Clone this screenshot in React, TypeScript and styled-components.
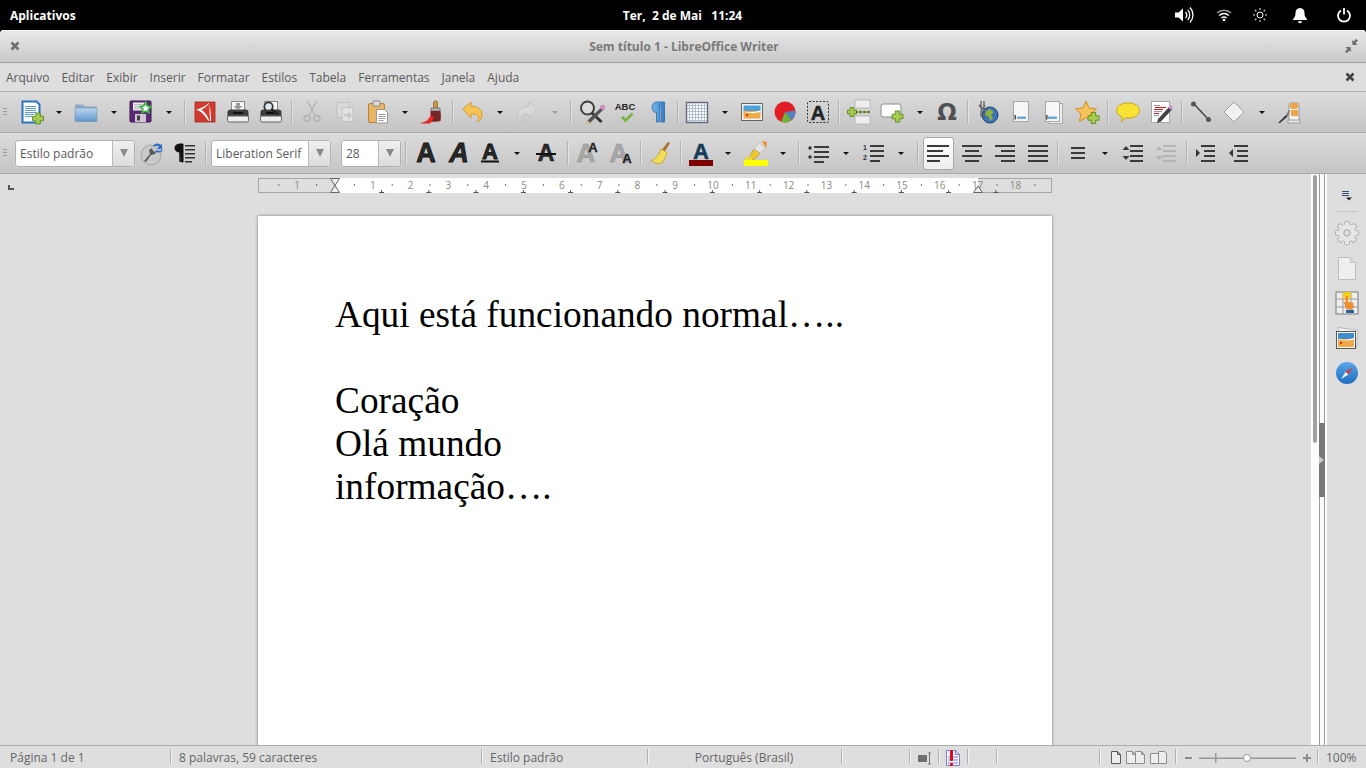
import React from "react";
import styled, { createGlobalStyle } from "styled-components";

const Global = createGlobalStyle`
  html, body { margin: 0; padding: 0; background: #000; overflow: hidden; }
  body { font-family: "Open Sans", "Noto Sans", sans-serif; }
`;

const Screen = styled.div`
  width: 1366px; height: 768px; display: flex; flex-direction: column; overflow: hidden; background: #000;
`;
const TopBar = styled.header`
  height: 30px; flex: none; display: grid; grid-template-columns: 1fr auto 1fr; align-items: center;
  color: #fff; font-size: 12px; font-weight: 700;
`;
const AppsLabel = styled.div` padding-left: 10px; `;
const Clock = styled.div` white-space: pre; margin-left: -1px; `;
const Tray = styled.div`
  display: flex; justify-content: flex-end; align-items: center; height: 30px;
`;
const TraySlot = styled.span<{ $w: number }>`
  width: ${(p) => p.$w}px; display: flex; justify-content: center; align-items: center;
`;
const Win = styled.div`
  flex: 1; min-height: 0; display: flex; flex-direction: column; border-radius: 4px 4px 0 0; overflow: hidden; background: #dedede;
`;
const TitleBar = styled.div`
  height: 32px; flex: none; display: grid; grid-template-columns: 1fr auto 1fr; align-items: center; padding: 0 8px 0 10px;
  background: linear-gradient(#e9e9e9, #c8c8c8); border-bottom: 1px solid #9c9c9c; box-shadow: inset 0 1px 0 #f4f4f4;
`;
const TitleEnd = styled.div` display: flex; justify-content: flex-end; `;
const WinTitle = styled.div` font-size: 12px; font-weight: 700; color: #7a7a7a; `;
const MenuBar = styled.nav`
  height: 28px; flex: none; display: flex; align-items: center; justify-content: space-between; padding: 0 11px 0 6px;
  background: #dedede; border-bottom: 1px solid #aeaeae;
`;
const MenuList = styled.div` display: flex; gap: 12px; `;
const MenuItem = styled.span` font-size: 12px; color: #5a5a5a; `;
const Toolbar = styled.div`
  height: 40px; flex: none; display: flex; align-items: center; padding-left: 3px;
  background: linear-gradient(#dcdcdc, #c4c4c4); border-bottom: 1px solid #a8a8a8;
`;
const Grip = styled.span<{ $w: number }>`
  width: ${(p) => p.$w}px; flex: none; height: 8px; position: relative;
  &::before { content: ""; display: block; width: 4px; height: 7px;
    background: repeating-linear-gradient(#9a9a9a 0 1px, transparent 1px 3px); }
`;
const Tool = styled.span<{ $w?: number }>`
  width: ${(p) => p.$w ?? 33}px; height: 32px; flex: none; display: flex; align-items: center; justify-content: center;
`;
const ActiveTool = styled(Tool)`
  width: 31px; height: 33px; margin: 0 1px 0 0; box-sizing: border-box; border: 1px solid #a8a8a8; border-radius: 3px;
  background: linear-gradient(#fff, #eee);
`;
const Drop = styled.span<{ $off?: boolean; $w?: number }>`
  width: ${(p) => p.$w ?? 22}px; flex: none; display: flex; justify-content: center;
  &::before { content: ""; border: 3px solid transparent; border-bottom-width: 0; border-top: 3.5px solid ${(p) => (p.$off ? "#9d9d9d" : "#111")}; }
`;
const Sep = styled.span<{ $w?: number }>`
  width: ${(p) => p.$w ?? 8}px; flex: none; height: 24px; display: flex; justify-content: center;
  &::before { content: ""; width: 1px; height: 100%; background: #b3b3b3; box-shadow: 1px 0 0 #e2e2e2; }
`;
const Combo = styled.div<{ $w: number; $ml?: number }>`
  width: ${(p) => p.$w}px; margin-left: ${(p) => p.$ml ?? 0}px; height: 27px; flex: none; box-sizing: border-box; display: flex;
  border: 1px solid #b0b0b0; border-radius: 3px; background: #fff; overflow: hidden; box-shadow: 0 0 1px #eee;
`;
const ComboText = styled.span`
  flex: 1; font-size: 12px; line-height: 25px; color: #5a5a5a; padding-left: 4px; white-space: nowrap;
`;
const ComboBtn = styled.span`
  width: 21px; flex: none; border-left: 1px solid #b8b8b8; background: linear-gradient(#f0f0f0, #dcdcdc);
  display: flex; align-items: center; justify-content: center;
  &::before { content: ""; border: 4px solid transparent; border-bottom-width: 0; border-top: 8px solid #8a8a8a; }
`;
const Workspace = styled.main` flex: 1; min-height: 0; display: flex; background: #dedede; `;
const DocArea = styled.div` width: 1311px; flex: none; overflow: hidden; padding-right: 1px; box-sizing: border-box; `;
const RulerRow = styled.div`
  display: grid; grid-template-columns: 1fr 794px 1fr; height: 42px; padding-top: 4px; box-sizing: border-box;
`;
const TabCorner = styled.span`
  display: block; width: 6px; height: 5px; margin: 7px 0 0 8px; border-left: 2px solid #555; border-bottom: 2px solid #555; box-sizing: border-box;
`;
const DocPage = styled.article`
  width: 794px; height: 1123px; margin: 0 auto; box-sizing: border-box; background: #fff; padding: 77px 77px;
  box-shadow: 0 0 3px rgba(0,0,0,.45);
  font-family: "Liberation Serif", "Times New Roman", serif; font-size: 37.33px; line-height: 43px; color: #000;
`;
const Para = styled.p` margin: 0; min-height: 43px; white-space: pre; `;
const ScrollTrack = styled.div` width: 8px; flex: none; background: #fff; padding: 1px 2px 0; box-sizing: border-box; `;
const ScrollThumb = styled.div` width: 4px; height: 268px; border-radius: 2px; background: #a0a0a0; `;
const Splitter = styled.div`
  width: 8px; flex: none; box-sizing: border-box; position: relative; background: #fbfbfb;
  border-left: 1px solid #9a9a9a; border-right: 2px solid #fff; box-shadow: inset -1px 0 0 #9a9a9a;
`;
const SplitHandle = styled.div`
  position: absolute; left: -1px; top: 249px; width: 6px; height: 74px; background: #777;
  display: flex; align-items: center;
  &::before { content: ""; border: 4px solid transparent; border-right-width: 0; border-left: 5px solid #c8c8c8; margin-left: 0; }
`;
const Deck = styled.aside`
  flex: 1; display: flex; flex-direction: column; align-items: center; padding-top: 3px; background: #dedede;
`;
const DeckTool = styled.span`
  width: 39px; height: 35px; flex: none; display: flex; align-items: center; justify-content: center;
`;
const DeckRule = styled.span` width: 23px; height: 1px; margin: -1px 0 3px; background: #c6c6c6; flex: none; `;
const StatusBar = styled.footer`
  height: 23px; flex: none; display: flex; background: #dedede; border-top: 1px solid #acacac; box-sizing: border-box;
  font-size: 12px; color: #666; line-height: 22px;
`;
const Cell = styled.div<{ $w: number; $pad?: number; $center?: boolean; $last?: boolean; $gap?: number }>`
  width: ${(p) => p.$w}px; flex: none; box-sizing: border-box; padding: 1px 0 0 ${(p) => p.$pad ?? 0}px; position: relative;
  display: flex; align-items: center; gap: ${(p) => p.$gap ?? 0}px; white-space: nowrap; justify-content: ${(p) => (p.$center ? "center" : "flex-start")};
  &::after { content: ""; display: ${(p) => (p.$last ? "none" : "block")}; position: absolute; right: -1px; top: 3px; bottom: 4px; width: 1px; background: #b0b0b0; box-shadow: 1px 0 0 #f2f2f2; }
`;

/* ---------- icon helpers ---------- */
const I = ({ children, w = 24, h = 24 }: { children: React.ReactNode; w?: number; h?: number }) => (
  <svg width={w} height={h} viewBox={`0 0 ${w} ${h}`} fill="none" style={{ display: "block", overflow: "visible" }}>{children}</svg>
);
const Plus = ({ x, y, s = 10 }: { x: number; y: number; s?: number }) => (
  <path d={`M${x - s / 5} ${y - s / 2}h${(2 * s) / 5}v${(3 * s) / 10}h${(3 * s) / 10}v${(2 * s) / 5}h${-(3 * s) / 10}v${(3 * s) / 10}h${-(2 * s) / 5}v${-(3 * s) / 10}h${-(3 * s) / 10}v${-(2 * s) / 5}h${(3 * s) / 10}z`} fill="#a5cc4c" stroke="#5d8a1c" strokeWidth=".9" />
);
const Bars = ({ rows, x = 0, c = "#3a3a3a", t = 2 }: { rows: number[][]; x?: number; c?: string; t?: number }) => (
  <>{rows.map(([a, y, w], i) => <rect key={i} x={x + a} y={y} width={w} height={t} fill={c} />)}</>
);
const txt = (fam: string) => ({ fontFamily: fam, fontWeight: 700 } as const);
const SANS = '"Liberation Sans", Arial, sans-serif';

const NewDoc = () => (<I><path d="M3.500 1.500h14l3 3v18h-17z" fill="#fff" stroke="#2c72bd" strokeWidth="2" /><Bars c="#5f9bd6" t={1} rows={[[6,6,11],[6,8,11],[6,10,11],[6,12,11],[6,14,9],[6,16,7]]} /><Plus x={19} y={18.500} s={11} /></I>);
const Folder = () => (<I><defs><linearGradient id="fo" x1="0" x2="0" y1="0" y2="1"><stop offset="0" stopColor="#bcd6ee" /><stop offset="1" stopColor="#5f97cd" /></linearGradient></defs><path d="M1 5.500a1 1 0 0 1 1-1h7l2 2h11a1 1 0 0 1 1 1v13a1 1 0 0 1-1 1H2a1 1 0 0 1-1-1z" fill="#8fa9c0" /><rect x="1" y="8" width="22" height="13.500" rx="1" fill="url(#fo)" stroke="#6f93b5" strokeWidth=".6" /></I>);
const Floppy = () => (<I><rect x="1" y="1" width="21" height="21" rx="1" fill="#5b2a72" stroke="#3b1850" /><rect x="4" y="2.500" width="14" height="8" fill="#eee" /><Bars c="#bbb" t={1} rows={[[5,4,11],[5,6,11],[5,8,9]]} /><rect x="6" y="14" width="11" height="8" fill="#cfc6d4" /><rect x="8" y="15.500" width="3" height="5" fill="#444" /><path d="M16.500 2.500l1.800 3.400 3.700.6-2.700 2.600.6 3.700-3.400-1.700-3.300 1.700.6-3.700-2.700-2.600 3.700-.6z" fill="#fff" stroke="#3fb24a" strokeWidth="1.700" /></I>);
const Pdf = () => (<I><rect x="2" y="2" width="20" height="20" fill="#d2392f" stroke="#a12a24" strokeWidth=".8" /><path d="M16 2.800c-3 3-8 5.700-13 7 4 .8 8 4 12 11h1.500C14 15 12 12 8 9.800c3-1 6-3.500 8-6zM16.500 5c-.3 5 .3 11 .6 16h.9C18 15 17.500 9 16.500 5z" fill="#fff" /></I>);
const Printer = ({ lens }: { lens?: boolean }) => (<I><rect x="5.500" y="1.500" width="13" height="10" fill="#f4f4f4" stroke="#8a8a8a" /><path d="M1.500 12.500a3 3 0 0 1 3-3h15a3 3 0 0 1 3 3v8h-21z" fill="#3c3c3c" /><rect x="1.500" y="16" width="21" height="6" rx="1.500" fill="#eee" stroke="#666" /><rect x="7" y="12" width="10" height="2" fill="#111" />{lens ? (<><circle cx="9.500" cy="6.500" r="4.200" fill="#dfe7ee" stroke="#333" strokeWidth="1.700" /><path d="M12.500 9.500l7 5" stroke="#222" strokeWidth="2.500" /></>) : <path d="M10 3h4v3h2.500L12 10 7.500 6H10z" fill="#999" />}</I>);
const Scissors = () => (<I><g stroke="#b4b4b4" strokeWidth="1.500"><path d="M7.500 1l7.500 14M16.500 1L9 15" /><circle cx="7" cy="18.500" r="3" /><circle cx="17" cy="18.500" r="3" /></g></I>);
const CopyOff = () => (<I><rect x="4" y="2.500" width="12" height="15" fill="#dadada" stroke="#c0c0c0" /><rect x="9" y="7.500" width="11" height="14" fill="#e2e2e2" stroke="#c0c0c0" /><path d="M11 14h4v-3l4 4.500-4 4v-3h-4z" fill="#c9c9c9" /></I>);
const Paste = () => (<I><rect x="2.500" y="3.500" width="16" height="19" rx="1.500" fill="#e9b566" stroke="#b9823a" /><rect x="7" y="1" width="7" height="5" rx="1" fill="#ddd" stroke="#888" /><path d="M10.500 9.500h8l3 3v10.500h-11z" fill="#fff" stroke="#999" /><Bars c="#999" t={1} rows={[[12.500,14,7],[12.500,16,7],[12.500,18,7],[12.500,20,5]]} /></I>);
const Brush = () => (<I><rect x="13.500" y="1" width="4" height="8" rx="1.500" fill="#c89648" stroke="#8a6222" strokeWidth=".7" /><rect x="11" y="8" width="9" height="3" fill="#b5b5b5" stroke="#555" strokeWidth=".6" /><path d="M10.500 11h10c.5 4 .5 7 0 10-4 .8-7 1-10 .7z" fill="#7a2525" /><path d="M1 22.500c4 0 7-2 9.500-7l3 1c0 3-2 5.500-3.500 7H1z" fill="#e32a2a" /></I>);
const Undo = ({ off }: { off?: boolean }) => (<I><g transform={off ? "translate(24 0) scale(-1 1)" : undefined}><path d="M2 9l8-7v4.200c6 0 11 3 11 8.800 0 3-1.500 5.500-5 7 2-2 2.300-4.500 1-6.300-1.300-1.500-4-2-7-1.700V18z" fill={off ? "#d8d8d8" : "#f6c452"} stroke={off ? "#c4c4c4" : "#d99a28"} /></g></I>);
const Find = () => (<I w={26}><circle cx="8.500" cy="8" r="6.500" fill="#e6e6e6" fillOpacity=".5" stroke="#3f3f3f" strokeWidth="2" /><path d="M13 13l9.500 9" stroke="#333" strokeWidth="3" /><path d="M22 7.500l2.500 2L11 23l-3.500 1 1-3.500z" fill="#555" /><circle cx="23.500" cy="7.500" r="2.200" fill="#d78fcf" stroke="#a86aa0" strokeWidth=".5" /><path d="M7.500 24l1-3.500 2.500 2.500z" fill="#f2d777" /></I>);
const Spell = () => (<I><text x="12" y="10" textAnchor="middle" fontSize="9.500" fill="#222" {...txt(SANS)}>ABC</text><path d="M9 17l3.500 3.500 7-7" stroke="#7fb044" strokeWidth="2.800" /></I>);
const Pilcrow = () => (<I><defs><linearGradient id="pl" x1="0" x2="1" y1="0" y2="0"><stop offset="0" stopColor="#7ab8ea" /><stop offset="1" stopColor="#2f80c8" /></linearGradient></defs><path d="M10 2h8.500v20H15V5h-1.500v17H10.500V12.500C7.500 12.500 6 10 6 7.500S7.500 2 10 2z" fill="url(#pl)" stroke="#1c5f9e" strokeWidth=".7" /></I>);
const Table = () => {
  const c = [3, 6, 9, 12, 15, 18];
  return (<I><rect x="1.500" y="2.500" width="21" height="20" fill="#fff" stroke="#667" strokeWidth="1.400" />{c.map((v) => <path key={v} d={`M${v + 1.500} 3v19M2 ${v + 2.500}h20`} stroke="#9db1cb" strokeWidth=".8" />)}</I>);
};
const Pic = () => (<I><rect x="1.500" y="3.500" width="21" height="17" fill="#f2f2f2" stroke="#666" /><rect x="3.500" y="5.500" width="17" height="7" fill="#4d9fdb" /><rect x="3.500" y="11" width="17" height="7.500" fill="#eeab47" /><path d="M3.500 11.500q8 2 17-1v1.500q-8 2-17 0z" fill="#fff" /><circle cx="7" cy="15" r="1.300" fill="#d3351f" /></I>);
const Chart = () => (<I><circle cx="12" cy="12" r="10.500" fill="#e11c24" /><path d="M12 12l10.500-1.500a10.500 10.500 0 0 1-4 9.500z" fill="#5284c4" /><path d="M12 12l6.500 8A10.500 10.500 0 0 1 8 21.700z" fill="#6fb13c" /></I>);
const TextBox = () => (<I><rect x="1.500" y="1.500" width="21" height="21" rx="1.500" stroke="#333" strokeDasharray="2 1.500" /><text x="12" y="19.500" textAnchor="middle" fontSize="20" fill="#222" stroke="#222" strokeWidth=".5" {...txt(SANS)}>A</text></I>);
const PageBreak = () => (<I><rect x="8" y="0" width="15" height="8" fill="#eee" stroke="#aaa" strokeWidth=".7" /><rect x="8" y="16" width="15" height="8" fill="#eee" stroke="#aaa" strokeWidth=".7" /><path d="M8 12h16" stroke="#5b7e14" strokeWidth="2" strokeDasharray="3 1" /><Plus x={5} y={12} s={9} /></I>);
const Field = () => (<I><rect x="1" y="4" width="20" height="13" rx="2" fill="#fff" stroke="#8c8c8c" /><Plus x={17.500} y={16.500} s={11} /></I>);
const Omega = () => (<I><text x="12" y="20" textAnchor="middle" fontSize="23" fill="#4f4f4f" {...txt('"DejaVu Sans", sans-serif')}>Ω</text></I>);
const Hyper = () => (<I><circle cx="14" cy="15" r="8" fill="#3d74b4" stroke="#1d4675" /><path d="M10 11l4-2 4 3-3 3 2 3-3 3-1-4-4-2z" fill="#8bb13f" /><path d="M5 1v8M8 1v8M3 5l4 5M9 5l-4 6M5 11v6M8 11v6" stroke="#5c5c5c" strokeWidth="1.300" /></I>);
const Foot = ({ stack }: { stack?: boolean }) => (<I>{stack && <rect x="6.500" y="3.500" width="14" height="20" fill="#eee" stroke="#aaa" />}<rect x={stack ? 3.500 : 4.500} y="1.500" width={stack ? 14 : 15} height="20" fill="#f6f6f6" stroke="#a8a8a8" /><rect x={stack ? 6 : 8} y="16.500" width="9" height="2.500" fill="#6da9d8" /><rect x={stack ? 4.200 : 5.500} y={15} width="1.300" height="4.500" fill="#333" /></I>);
const Star = () => (<I><path d="M11 1l3 7 7.500.8-5.500 5 1.500 7.500L11 17.500l-6.500 3.800L6 14 .5 8.800 8 8z" fill="#f7c15a" stroke="#d18f1f" /><Plus x={18.500} y={18} s={11} /></I>);
const Balloon = () => (<I><path d="M12 3c6.500 0 11.500 3 11.500 7.500S18.500 18 13 18c-1.500 0-3 0-4-.2L5.500 21.500l.8-4.500C2.500 15.500.5 13 .5 10.500.5 6 5.500 3 12 3z" fill="#f7e235" stroke="#c9a90f" /></I>);
const Track = () => (<I><rect x="2.500" y="1.500" width="18" height="21" fill="#fff" stroke="#a8a8a8" /><Bars c="#999" t={1} rows={[[5,5,6],[5,11,8],[5,15,5]]} /><Bars c="#d91c1c" t={1} rows={[[6,7,11],[5,9,9],[5,13,5]]} /><path d="M20 7l3 2.500-11 12-4 1.500 1-4z" fill="#444" /><circle cx="21.800" cy="7.500" r="2" fill="#d78fcf" /></I>);
const LineTool = () => (<I><path d="M5 4l14 15" stroke="#444" strokeWidth="1.500" /><circle cx="4.500" cy="4" r="2.500" fill="#555" /><circle cx="19.500" cy="19.500" r="2.500" fill="#555" /></I>);
const Diamond = () => (<I><path d="M12 2l10 10-10 10L2 12z" fill="#f1f1f1" stroke="#9c9c9c" /></I>);
const Bottle = () => (<I><rect x="12" y="3" width="10" height="19" rx="2" fill="#f2f2f2" stroke="#999" /><rect x="13" y="3" width="8" height="6" rx="2" fill="#f0a44a" /><rect x="14" y="10" width="7" height="6" fill="#f0a44a" /><rect x="11" y="20" width="12" height="3" fill="#e4e4e4" stroke="#888" strokeWidth=".7" /><path d="M1 23l8-8 1.500 1.500L3 23z" fill="#333" /><path d="M9 15l3-5 1 .5-2 6z" fill="#777" /></I>);
const FontA = ({ italic, under }: { italic?: boolean; under?: boolean }) => (
  <I><text x="12" y={under ? 17.500 : 21} textAnchor="middle" fontSize={under ? 22 : 27} fill="#2a2a2a" stroke="#111" strokeWidth=".8" fontStyle={italic ? "italic" : undefined} {...txt(SANS)}>A</text>
    {under && <rect x="3" y="19.500" width="18" height="2" fill="#111" />}</I>
);
const StrikeA = () => (<I><text x="12" y="20" textAnchor="middle" fontSize="23" fill="#2a2a2a" stroke="#111" strokeWidth=".5" {...txt(SANS)}>A</text><rect x="2" y="12" width="20" height="2" fill="#111" /></I>);
const Grow = ({ shrink }: { shrink?: boolean }) => (<I><text x="10" y="21" textAnchor="middle" fontSize="26" fill="#a8a8a8" stroke="#8e8e8e" strokeWidth=".5" {...txt(SANS)}>A</text><text x={shrink ? 18 : 17} y={shrink ? 22 : 11} textAnchor="middle" fontSize="13" fill="#222" stroke="#222" strokeWidth=".3" {...txt(SANS)}>A</text></I>);
const Broom = () => (<I><path d="M20 1l2 1-5 8-3-1.500z" fill="#a9702a" /><path d="M13 8l6 3.500c-1 4-3 8-5.500 11C10 23 6 22 3 19.500c4-.5 8-6 10-11.500z" fill="#f1dd58" stroke="#b9a12d" strokeWidth=".8" /></I>);
const FontColor = () => (<I><text x="12" y="18" textAnchor="middle" fontSize="22" fill="#123a57" stroke="#123a57" strokeWidth=".5" {...txt(SANS)}>A</text><rect x="0" y="19" width="24" height="6" fill="#7f0000" /></I>);
const Marker = () => (<I><path d="M6 15l4-7 6 4-5 6-5 1z" fill="#efc52f" stroke="#b38c12" strokeWidth=".6" /><path d="M10 8l5-6 7 5-6 5z" fill="#e5e5e5" stroke="#aaa" strokeWidth=".5" /><path d="M18 0l5 1-1 6z" fill="#ef8d2c" /><rect x="0" y="19" width="24" height="6" fill="#ffff00" /><rect x="1" y="16" width="7" height="3" fill="#e9d83e" /></I>);
const BulletList = () => (<I><circle cx="3" cy="7" r="1.700" fill="#333" /><circle cx="3" cy="16" r="1.700" fill="#333" /><Bars t={2} rows={[[7,5,15],[7,10,15],[7,15,15],[7,20,10]]} /></I>);
const NumList = () => (<I><text x="3" y="9" textAnchor="middle" fontSize="7" fill="#333" {...txt(SANS)}>1</text><text x="3" y="19" textAnchor="middle" fontSize="7" fill="#333" {...txt(SANS)}>2</text><Bars t={2} rows={[[8,4,14],[8,9,14],[8,14,14],[8,19,10]]} /></I>);
const Align = ({ rows }: { rows: number[][] }) => <I><Bars t={2} rows={rows} /></I>;
const Spacing = () => (<I><Bars t={2} rows={[[5,6,14],[5,11,14],[5,16,14]]} /></I>);
const ParaSpace = ({ off }: { off?: boolean }) => { const c = off ? "#b4b4b4" : "#3a3a3a"; return (<I><path d="M5 5l3.500 4h-7zM5 19l3.500-4h-7z" fill={c} /><Bars c={c} t={2} rows={[[9,4,13],[9,9,13],[9,14,13],[9,19,13]]} /></I>); };
const Indent = ({ rev }: { rev?: boolean }) => (<I><path d={rev ? "M1 12l4-4v8z" : "M5 12L1 8v8z"} fill="#333" /><Bars t={2} rows={[[6,4,14],[9,9,11],[9,14,11],[6,19,14]]} /></I>);
const UpdateStyle = () => (<I w={26}><circle cx="12" cy="14" r="10" fill="#c9c9c9" stroke="#a5a5a5" /><path d="M5 20l6-7-1-4 3-2 1 3 3 1-1 2-4 1-5 7z" fill="#5a5a5a" /><path d="M14 5a5 5 0 0 1 8-1l1-2v6h-5l2-2a3 3 0 0 0-5 0zM24 9a5 5 0 0 1-8 1l2-1a3 3 0 0 0 5-1z" fill="#2e6fc4" /></I>);
const ParaMark = () => (<I><path d="M7 21V11C3 11 2 9 2 7s1.500-4 5-4h3v18H8.500V5M7 5v16" fill="#111" stroke="#111" /><Bars c="#333" t={1.500} rows={[[12,4,10],[12,8,10],[12,12,10],[12,16,10],[12,20,7]]} /></I>);

const Close = ({ c = "#666" }: { c?: string }) => (<I w={10} h={10}><path d="M1.500 1.500l7 7M8.500 1.500l-7 7" stroke={c} strokeWidth="2.600" /></I>);
const Collapse = () => (<I w={14} h={14}><path d="M8 6h5l-2-2 2.500-2.500-2-1.500L9 2.500 7.500 1zM6 8H1l2 2-2.500 2.500 2 1.500L5 11.500 6.500 13z" transform="translate(.5 0)" fill="#6c6c6c" /></I>);

const Volume = () => (<I w={20} h={18}><path d="M1 6.500h3.500L9 2.500v13l-4.500-4H1z" fill="#fff" /><path d="M11.500 6a4.500 4.500 0 0 1 0 6M13.800 4a7.500 7.500 0 0 1 0 10M16 1.500a11 11 0 0 1 0 15" stroke="#fff" strokeWidth="1.300" /></I>);
const Wifi = () => (<I w={16} h={14}><path d="M1 5a10 10 0 0 1 14 0" stroke="#9b9b9b" strokeWidth="1.500" /><path d="M3.200 7.500a7 7 0 0 1 9.600 0M5.500 10a3.800 3.800 0 0 1 5 0" stroke="#fff" strokeWidth="1.500" /><circle cx="8" cy="12" r="1.300" fill="#fff" /></I>);
const Sun = () => (<I w={14} h={14}><circle cx="7" cy="7" r="3" stroke="#fff" /><path d="M7 0v2M7 12v2M0 7h2M12 7h2M2 2l1.400 1.400M10.600 10.600L12 12M2 12l1.400-1.400M10.600 3.400L12 2" stroke="#ddd" strokeWidth="1.100" /></I>);
const Bell = () => (<I w={14} h={16}><path d="M7 1c3 0 4.500 2.200 4.500 5 0 3.500 1 4.500 2.500 6v1H0v-1c1.500-1.500 2.500-2.500 2.500-6C2.500 3.200 4 1 7 1z" fill="#fff" /><path d="M5 14.200h4a2 2 0 0 1-4 0z" fill="#fff" /></I>);
const Power = () => (<I w={14} h={14}><path d="M4 2.500a6 6 0 1 0 6 0" stroke="#fff" strokeWidth="1.800" /><path d="M7 0v6.500" stroke="#fff" strokeWidth="1.800" /></I>);

const DeckMenu = () => (<I w={12} h={12}><Bars c="#3c4c6c" t={1} rows={[[1,2,7],[1,4,7],[1,6,7]]} /><path d="M5 8.500h6L8 11.500z" fill="#222" /></I>);
const Gear = () => {
  const teeth = [0, 45, 90, 135, 180, 225, 270, 315];
  return (<I>{teeth.map((a) => <rect key={a} x="9.500" y="0.500" width="5" height="5" rx="1" fill="#e6e6e6" stroke="#b2b2b2" transform={`rotate(${a} 12 12)`} />)}<circle cx="12" cy="12" r="8.500" fill="#e6e6e6" /><circle cx="12" cy="12" r="3.200" fill="#dedede" stroke="#a2a2a2" /></I>);
};
const DeckPage = () => (<I><path d="M3.500 1.500h12l5 5v17h-17z" fill="#efefef" stroke="#bdbdbd" /><path d="M15.500 1.500v5h5" fill="#dcdcdc" stroke="#c4c4c4" /></I>);
const DeckStyles = () => (<I><rect x="1" y="1" width="22" height="22" fill="#eee" stroke="#7a7a7a" /><path d="M1 8h22M1 16h22M8 1v22M16 1v22" stroke="#9a9a9a" /><rect x="8" y="1" width="8" height="7" fill="#f3cf1f" /><rect x="11" y="19" width="8" height="3" fill="#2a5fa0" /><path d="M8.500 11h2V5h2.500v6l5 .5c1 3 .5 5-.5 7h-6z" fill="#ef8e2c" /></I>);
const DeckGallery = () => (<I><path d="M3 1.500l20 3-1.500 17-18.500.5z" fill="#f2f2f2" stroke="#999" strokeWidth=".6" /><rect x="1.500" y="5.500" width="19" height="17" fill="#fff" stroke="#555" /><rect x="3" y="7" width="16" height="7" fill="#3f8ed2" /><rect x="3" y="13" width="16" height="8" fill="#efaa46" /><path d="M3 13q8 2 16-1v1.500q-8 2-16 0z" fill="#fff" /><circle cx="6" cy="17" r="1.200" fill="#d3351f" /></I>);
const Compass = () => (<I><defs><linearGradient id="nv" x1="0" x2="0" y1="0" y2="1"><stop offset="0" stopColor="#5aa7e8" /><stop offset="1" stopColor="#1f6cc0" /></linearGradient></defs><circle cx="12" cy="12" r="11" fill="url(#nv)" /><path d="M17.500 6.500L10.500 11l3 2.500z" fill="#e3322a" /><path d="M6 18l7.500-4.500-3-2.500z" fill="#f2f2f2" /></I>);

const SmallPage = ({ x = 0, c = "#5a5a5a" }: { x?: number; c?: string }) => (<path d={`M${x + .500} 1.500h6l3 3v9h-9zM${x + 6.500} 1.500v3h3`} fill="#eee" stroke={c} />);
const StatusInsert = () => (<I w={14} h={14}><rect x="1" y="4" width="9" height="7" fill="#707070" /><path d="M11 2h3M11 13h3M12.500 2v11" stroke="#777" /></I>);
const StatusSig = () => (<I w={16} h={18}><path d="M1.500 1.500h9l4 4v11h-13zM10.500 1.500v4h4M3 8h10M3 11h10M3 14h10" fill="#f8f8ff" stroke="#6e6ee0" strokeWidth=".9" /><rect x="5" y="1" width="3" height="11" rx="1" fill="#e01010" /><rect x="5" y="14" width="3" height="3" rx="1" fill="#e01010" /></I>);
const ViewSingle = () => (<I w={10} h={15}><SmallPage /></I>);
const ViewDouble = () => (<I w={19} h={15}><SmallPage c="#8c8c8c" /><SmallPage x={9} c="#8c8c8c" /></I>);
const ViewBook = () => (<I w={17} h={15}><path d="M.5 3.500h8v10h-8zM8.500 1.500h6l2 2v10h-8z" fill="#eee" stroke="#8c8c8c" /></I>);
const Zoomer = () => (<I w={126} h={14}><rect x="0" y="6" width="7" height="2" fill="#8a8a8a" /><rect x="14" y="6.500" width="97" height="1.500" fill="#999" /><rect x="30" y="2" width="1.500" height="10" fill="#999" /><circle cx="62" cy="7" r="3.500" fill="#fff" stroke="#999" /><path d="M118 6h3V3h2v3h3v2h-3v3h-2V8h-3z" fill="#8a8a8a" /></I>);

const Ruler = () => {
  const cm = 37.8;
  const org = 77;
  const nums = Array.from({ length: 18 }, (_, i) => i + 1);
  const halfs = Array.from({ length: 42 }, (_, i) => i - 2).map((k) => org + (k + 0.5) * cm).filter((x) => x > 0 && x < 794);
  const ticks = Array.from({ length: 14 }, (_, i) => org + 46.6 + i * 47.25);
  const color = "#8e8880";
  return (
    <svg width="794" height="15" viewBox="0 0 794 15" style={{ display: "block" }}>
      <rect x=".5" y=".5" width="793" height="14" fill="#dedede" stroke="#a6a6a6" />
      <rect x={org} y="0" width="643" height="15" fill="#fff" />
      {halfs.map((x) => <rect key={x} x={x} y="6" width="1" height="2" fill="#777" />)}
      {ticks.map((x) => <path key={x} d={`M${x - 2.500} 14.500h5M${x} 12v3`} stroke="#555" strokeWidth="1" />)}
      <text x={org - cm} y="11" textAnchor="middle" fontSize="10" fill={color} fontFamily='"Open Sans", sans-serif'>1</text>
      {nums.map((n) => <text key={n} x={org + n * cm} y="11" textAnchor="middle" fontSize="10" fill={color} fontFamily='"Open Sans", sans-serif'>{n}</text>)}
      <path d={`M${org - 4.500} .5h9L${org} 7.500l4.500 7h-9l4.500-7z`} fill="#eee" stroke="#666" />
      <path d={`M${720 - 4.500} 14.500h9L${720} 8z`} fill="#eee" stroke="#666" />
    </svg>
  );
};

const MENUS = ["Arquivo", "Editar", "Exibir", "Inserir", "Formatar", "Estilos", "Tabela", "Ferramentas", "Janela", "Ajuda"];
const T = ({ c }: { c: React.ReactNode }) => <Tool>{c}</Tool>;

export default function App() {
  return (
    <Screen>
      <Global />
      <TopBar>
        <AppsLabel>Aplicativos</AppsLabel>
        <Clock>{"Ter,  2 de Mai   11:24"}</Clock>
        <Tray>
          <TraySlot $w={44}><Volume /></TraySlot>
          <TraySlot $w={36}><Wifi /></TraySlot>
          <TraySlot $w={36}><Sun /></TraySlot>
          <TraySlot $w={44}><Bell /></TraySlot>
          <TraySlot $w={44}><Power /></TraySlot>
        </Tray>
      </TopBar>
      <Win>
        <TitleBar>
          <Close c="#6e6e6e" />
          <WinTitle>Sem título 1 - LibreOffice Writer</WinTitle>
          <TitleEnd><Collapse /></TitleEnd>
        </TitleBar>
        <MenuBar>
          <MenuList>{MENUS.map((m) => <MenuItem key={m}>{m}</MenuItem>)}</MenuList>
          <Close c="#444" />
        </MenuBar>
        <Toolbar>
          <Grip $w={11.500} />
          <T c={<NewDoc />} /><Drop />
          <T c={<Folder />} /><Drop />
          <T c={<Floppy />} /><Drop />
          <Sep $w={9} />
          <T c={<Pdf />} /><T c={<Printer />} /><T c={<Printer lens />} />
          <Sep />
          <T c={<Scissors />} /><T c={<CopyOff />} /><T c={<Paste />} /><Drop $w={21} />
          <T c={<Brush />} />
          <Sep />
          <T c={<Undo />} /><Drop $w={21} />
          <T c={<Undo off />} /><Drop $off />
          <Sep $w={10} />
          <T c={<Find />} /><T c={<Spell />} /><T c={<Pilcrow />} />
          <Sep $w={6} />
          <T c={<Table />} /><Drop />
          <T c={<Pic />} /><T c={<Chart />} /><T c={<TextBox />} />
          <Sep />
          <T c={<PageBreak />} /><T c={<Field />} /><Drop />
          <T c={<Omega />} />
          <Sep $w={8} />
          <T c={<Hyper />} /><T c={<Foot />} /><T c={<Foot stack />} /><T c={<Star />} />
          <Sep />
          <T c={<Balloon />} /><T c={<Track />} />
          <Sep $w={7} />
          <T c={<LineTool />} /><T c={<Diamond />} /><Drop />
          <T c={<Bottle />} />
        </Toolbar>
        <Toolbar>
          <Grip $w={12} />
          <Combo $w={120}><ComboText>Estilo padrão</ComboText><ComboBtn /></Combo>
          <T c={<UpdateStyle />} />
          <T c={<ParaMark />} />
          <Sep $w={8} />
          <Combo $w={120} $ml={2}><ComboText>Liberation Serif</ComboText><ComboBtn /></Combo>
          <Combo $w={60} $ml={10}><ComboText>28</ComboText><ComboBtn /></Combo>
          <Sep $w={8} />
          <T c={<FontA />} /><T c={<FontA italic />} /><Tool $w={30}><FontA under /></Tool><Drop $w={24} />
          <Tool $w={34}><StrikeA /></Tool>
          <Sep />
          <T c={<Grow />} /><T c={<Grow shrink />} />
          <Sep $w={6} />
          <T c={<Broom />} />
          <Sep $w={8} />
          <T c={<FontColor />} /><Drop />
          <T c={<Marker />} /><Drop />
          <Sep $w={8} />
          <T c={<BulletList />} /><Drop />
          <T c={<NumList />} /><Drop />
          <Sep $w={11} />
          <ActiveTool><Align rows={[[0,4,22],[0,9,16],[0,14,22],[0,19,13]]} /></ActiveTool>
          <T c={<Align rows={[[2,4,20],[5,9,14],[2,14,20],[5,19,14]]} />} />
          <T c={<Align rows={[[2,4,20],[8,9,14],[2,14,20],[8,19,14]]} />} />
          <T c={<Align rows={[[2,4,20],[2,9,20],[2,14,20],[2,19,20]]} />} />
          <Sep $w={7} />
          <T c={<Spacing />} /><Drop />
          <T c={<ParaSpace />} /><T c={<ParaSpace off />} />
          <Sep $w={8} />
          <T c={<Indent />} /><T c={<Indent rev />} />
        </Toolbar>
        <Workspace>
          <DocArea>
            <RulerRow>
              <TabCorner />
              <Ruler />
            </RulerRow>
            <DocPage>
              <Para>Aqui está funcionando normal…..</Para>
              <Para />
              <Para>Coração</Para>
              <Para>Olá mundo</Para>
              <Para>informação….</Para>
            </DocPage>
          </DocArea>
          <ScrollTrack><ScrollThumb /></ScrollTrack>
          <Splitter><SplitHandle /></Splitter>
          <Deck>
            <DeckTool><DeckMenu /></DeckTool>
            <DeckRule />
            <DeckTool><Gear /></DeckTool>
            <DeckTool><DeckPage /></DeckTool>
            <DeckTool><DeckStyles /></DeckTool>
            <DeckTool><DeckGallery /></DeckTool>
            <DeckTool><Compass /></DeckTool>
          </Deck>
        </Workspace>
        <StatusBar>
          <Cell $w={170} $pad={10}>Página 1 de 1</Cell>
          <Cell $w={311} $pad={9}>8 palavras, 59 caracteres</Cell>
          <Cell $w={166} $pad={9}>Estilo padrão</Cell>
          <Cell $w={194} $center>Português (Brasil)</Cell>
          <Cell $w={68} />
          <Cell $w={29} $center><StatusInsert /></Cell>
          <Cell $w={29} $center><StatusSig /></Cell>
          <Cell $w={29} />
          <Cell $w={103} />
          <Cell $w={76} $pad={12} $gap={5}><ViewSingle /><ViewDouble /><ViewBook /></Cell>
          <Cell $w={142} $pad={10}><Zoomer /></Cell>
          <Cell $w={49} $pad={9} $last>100%</Cell>
        </StatusBar>
      </Win>
    </Screen>
  );
}
